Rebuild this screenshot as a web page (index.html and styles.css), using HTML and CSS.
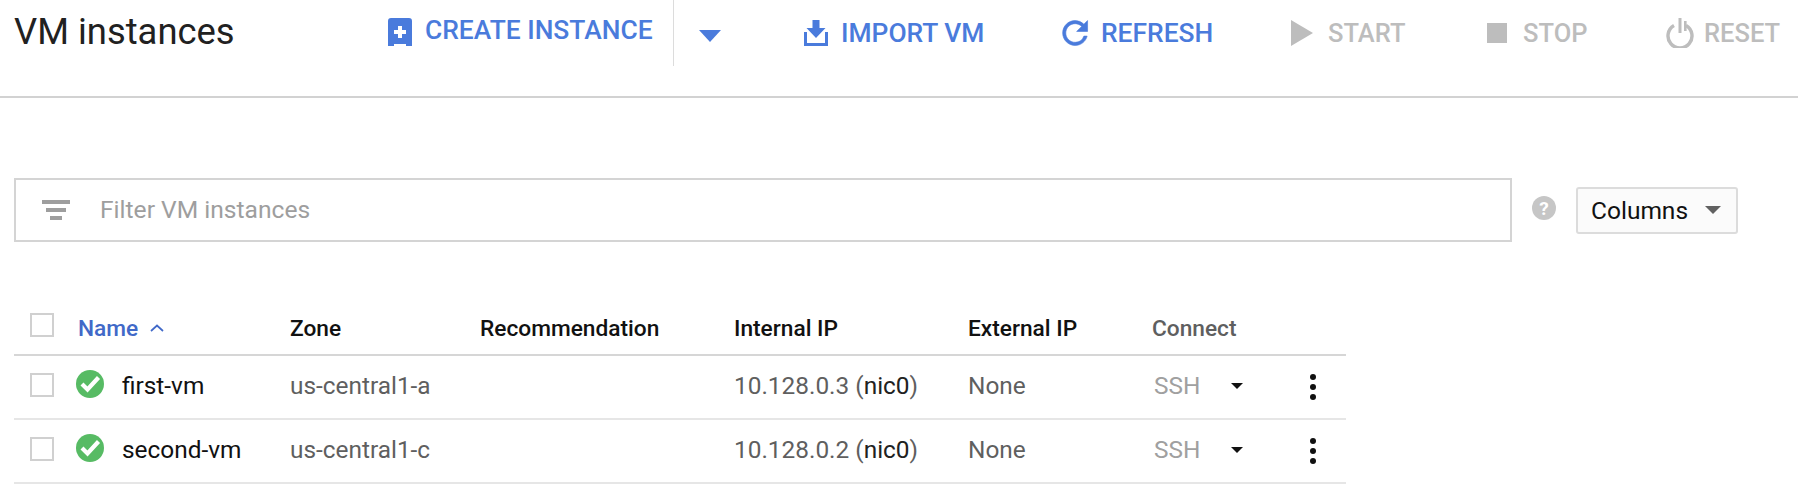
FILE: index.html
```html
<!DOCTYPE html>
<html lang="en">
<head>
<meta charset="utf-8">
<title>VM instances</title>
<link rel="stylesheet" href="styles.css">
</head>
<body>
<header class="toolbar">
  <h1 class="title">VM instances</h1>
  <button class="action create"><svg class="ico" viewBox="0 0 24 28"><path d="M3 0h18a3 3 0 0 1 3 3v25h-6v-2H6v2H0V3a3 3 0 0 1 3-3z" fill="#4a7bdc"/><path d="M10 8h4v4h4v4h-4v4h-4v-4H6v-4h4z" fill="#fff"/></svg>CREATE INSTANCE</button>
  <span class="divider"></span>
  <button class="caret-btn"><svg viewBox="0 0 22 12" class="caret"><path d="M0 0h22L11 12z"/></svg></button>
  <button class="action import"><svg class="ico" viewBox="0 0 24 26"><path d="M8.500 0h7v8h6L12 18 2.500 8h6z" fill="#4a7bdc"/><path d="M0 12h3v11h18V12h3v14H0z" fill="#4a7bdc"/></svg>IMPORT VM</button>
  <button class="action refresh"><svg class="ico wide" viewBox="4 3 16.500 18"><path fill="#4a7bdc" stroke="#4a7bdc" stroke-width=".4" d="M17.650 6.350A7.958 7.958 0 0 0 12 4c-4.420 0-7.990 3.580-7.990 8s3.570 8 7.990 8c3.730 0 6.840-2.550 7.730-6h-2.080A5.990 5.990 0 0 1 12 18c-3.310 0-6-2.690-6-6s2.690-6 6-6c1.660 0 3.140.690 4.220 1.780L13 11h7V4l-2.350 2.350z"/></svg>REFRESH</button>
  <button class="action off start"><svg class="ico" viewBox="0 0 22 26"><path d="M0 0l22 13L0 26z" fill="#bdbdbd"/></svg>START</button>
  <button class="action off stop"><svg class="ico" viewBox="0 0 20 20"><path d="M0 0h20v20H0z" fill="#bdbdbd"/></svg>STOP</button>
  <button class="action off reset"><svg class="ico wide" viewBox="0 0 28 30"><path d="M8 7.500a12 12 0 1 0 12 0" fill="none" stroke="#bdbdbd" stroke-width="3.400"/><path d="M12.500 0h3v15h-3z" fill="#bdbdbd"/><path d="M18 3h2.600v10H18z" fill="#bdbdbd"/></svg>RESET</button>
</header>

<section class="filter-row">
  <div class="filter">
    <svg class="filter-ico" viewBox="0 0 28 20"><path d="M0 0h28v4H0zM4 8h20v4H4zM8 16h12v4H8z" fill="#9e9e9e"/></svg>
    <span class="placeholder">Filter VM instances</span>
  </div>
  <svg class="help" viewBox="0 0 24 24"><circle cx="12" cy="12" r="12" fill="#c6c6c6"/><text x="12" y="18.500" text-anchor="middle" class="help-q">?</text></svg>
  <button class="columns">Columns<svg viewBox="0 0 16 8" class="col-caret"><path d="M0 0h16L8 8z"/></svg></button>
</section>

<section class="vm-table">
  <div class="row head">
    <span class="check"></span>
    <span class="cell name sort">Name<svg class="sort-ico" viewBox="0 0 14 8"><path d="M1 7l6-5.500L13 7" fill="none" stroke="#4169c8" stroke-width="1.700"/></svg></span>
    <span class="cell">Zone</span>
    <span class="cell">Recommendation</span>
    <span class="cell">Internal IP</span>
    <span class="cell">External IP</span>
    <span class="cell connect">Connect</span>
    <span></span>
  </div>
  <div class="row">
    <span class="check"></span>
    <span class="cell name"><svg class="ok" viewBox="0 0 28 28"><circle cx="14" cy="14" r="14" fill="#57bb64"/><path d="M6 14l5.500 5.500L22.500 7.500" fill="none" stroke="#fff" stroke-width="4.200"/></svg>first-vm</span>
    <span class="cell muted">us-central1-a</span>
    <span class="cell"></span>
    <span class="cell muted">10.128.0.3 (<span class="nic">nic0</span>)</span>
    <span class="cell muted">None</span>
    <span class="cell ssh">SSH<svg viewBox="0 0 12 6" class="ssh-caret"><path d="M0 0h12L6 6z"/></svg></span>
    <span class="more"><i></i><i></i><i></i></span>
  </div>
  <div class="row">
    <span class="check"></span>
    <span class="cell name"><svg class="ok" viewBox="0 0 28 28"><circle cx="14" cy="14" r="14" fill="#57bb64"/><path d="M6 14l5.500 5.500L22.500 7.500" fill="none" stroke="#fff" stroke-width="4.200"/></svg>second-vm</span>
    <span class="cell muted">us-central1-c</span>
    <span class="cell"></span>
    <span class="cell muted">10.128.0.2 (<span class="nic">nic0</span>)</span>
    <span class="cell muted">None</span>
    <span class="cell ssh">SSH<svg viewBox="0 0 12 6" class="ssh-caret"><path d="M0 0h12L6 6z"/></svg></span>
    <span class="more"><i></i><i></i><i></i></span>
  </div>
</section>
</body>
</html>
```

FILE: styles.css
```css
* { box-sizing: border-box; }
html, body { margin: 0; padding: 0; background: #fff; }
body { width: 1798px; height: 502px; overflow: hidden; font-family: Roboto, "Liberation Sans", sans-serif; color: #212121; }
button { font-family: inherit; background: none; border: 0; padding: 0; margin: 0; }

.toolbar { height: 98px; border-bottom: 2px solid #d2d2d2; display: flex; align-items: flex-start; padding-left: 14px; }
.title { margin: 13px 0 0; width: 374px; font-size: 36.4px; line-height: 38px; font-weight: 400; color: #212121; flex: none; white-space: nowrap; }
.action { display: flex; align-items: center; height: 32px; margin-top: 17px; font-size: 26.4px; font-weight: 500; color: #4a7bdc; white-space: nowrap; flex: none; }
.action.off { color: #bdbdbd; font-size: 25.5px; }
.ico { width: 24px; height: 28px; margin-right: 13px; flex: none; }
.create { width: 285px; margin-top: 14px; }
.create .ico { margin-top: 4px; }
.divider { width: 1px; height: 66px; background: #dcdcdc; flex: none; }
.caret-btn { width: 130px; height: 66px; padding: 2px 0 0 25px; display: flex; align-items: flex-start; flex: none; }
.caret { width: 22px; height: 12px; margin-top: 28px; fill: #4a7bdc; }
.import { width: 258px; }
.import .ico { height: 26px; }
.refresh { width: 229px; }
.refresh .ico { width: 27px; margin-right: 12px; }
.start { width: 196px; }
.start .ico { width: 22px; height: 26px; margin-right: 15px; }
.stop { width: 179px; }
.stop .ico { width: 20px; height: 20px; margin-right: 16px; }
.reset .ico { width: 28px; height: 30px; margin-right: 10px; }

.filter-row { display: flex; align-items: center; margin: 80px 0 0 14px; height: 64px; }
.filter { width: 1498px; height: 64px; border: 2px solid #d4d4d4; display: flex; align-items: center; padding-left: 26px; }
.filter-ico { width: 28px; height: 20px; margin-right: 30px; flex: none; }
.placeholder { font-size: 24.6px; color: #9e9e9e; margin-top: -2px; }
.help { width: 24px; height: 24px; margin: -4px 0 0 20px; flex: none; }
.help-q { font: 700 19px Roboto, sans-serif; fill: #fff; }
.columns { margin-left: 20px; width: 162px; height: 47px; border: 2px solid #dcdcdc; border-radius: 3px; background: #fbfbfb; font-size: 24.5px; color: #111; display: flex; align-items: center; padding-left: 13px; }
.col-caret { width: 16px; height: 8px; margin-left: 17px; fill: #616161; }

.vm-table { margin: 52px 0 0 14px; width: 1332px; }
.row { display: grid; grid-template-columns: 62px 214px 190px 254px 234px 184px 148px 46px; align-items: center; height: 64px; padding-bottom: 5px; border-bottom: 2px solid #e6e6e6; font-size: 24.4px; }
.row.head { height: 62px; padding: 2px 0 0; border-bottom-color: #d6d6d6; font-weight: 500; font-size: 22.7px; color: #111; }
.cell { display: flex; align-items: center; white-space: pre; padding-top: 2px; }
.head .cell { padding-top: 6px; }
.check { width: 24px; height: 24px; border: 2px solid #d0d0d0; margin-left: 16px; }
.name { color: #111; }
.sort { color: #4169c8; padding-left: 2px; }
.sort-ico { width: 14px; height: 8px; margin-left: 12px; }
.ok { width: 28px; height: 28px; margin: 0 18px 4px 0; flex: none; }
.muted { color: #5f5f5f; }
.nic { color: #212121; }
.connect { color: #5f5f5f; }
.ssh { color: #a0a0a0; padding-left: 2px; }
.ssh-caret { width: 12px; height: 6px; margin-left: 31px; fill: #111; }
.more { display: flex; flex-direction: column; gap: 4px; width: 6px; margin: 4px 0 0 10px; }
.more i { width: 6px; height: 6px; border-radius: 50%; background: #111; display: block; }
```
